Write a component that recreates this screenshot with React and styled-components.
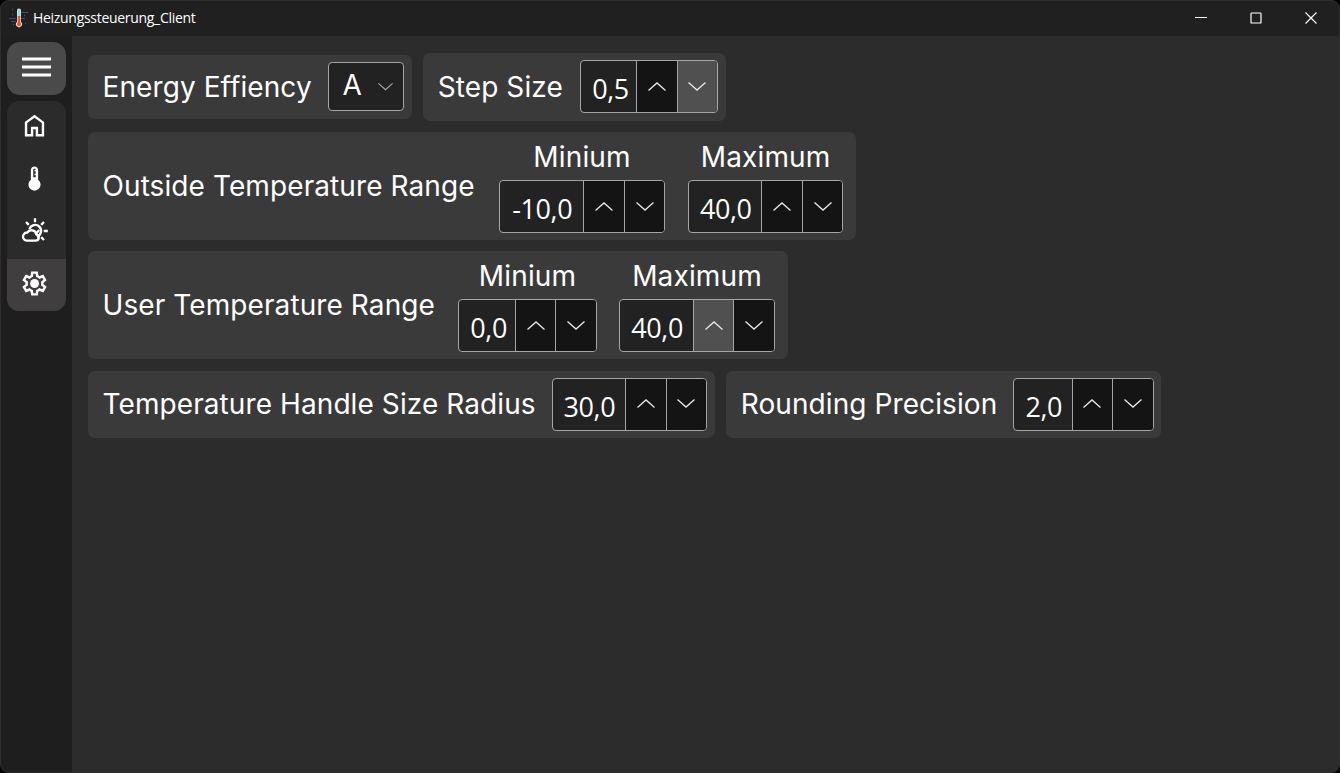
import React from 'react';
import styled, { createGlobalStyle } from 'styled-components';

const GlobalStyle = createGlobalStyle`
  * { box-sizing: border-box; }
  body { margin: 0; background: #000; overflow: hidden; }
`;

const Window = styled.div`
  position: relative;
  width: 1340px;
  height: 773px;
  display: flex;
  flex-direction: column;
  background: #2c2c2c;
  color: #fff;
  border-radius: 9px;
  overflow: hidden;
  font-family: Inter, sans-serif;

  &::after {
    content: '';
    position: absolute;
    inset: 0;
    border: 1px solid #2e2e2e;
    border-radius: 9px;
    pointer-events: none;
  }
`;

const TitleBar = styled.header`
  height: 36px;
  flex: none;
  display: flex;
  align-items: center;
  padding: 0 2px 1px 9px;
  background: #202020;
`;

const Title = styled.span`
  flex: 1;
  margin-left: 4px;
  font: 14px 'Open Sans', sans-serif;
  letter-spacing: -0.3px;
  white-space: nowrap;
`;

const CaptionButton = styled.button`
  width: 55px;
  height: 35px;
  padding: 0;
  border: 0;
  background: none;
  display: flex;
  align-items: center;
  justify-content: center;
`;

const Body = styled.div`
  flex: 1;
  display: flex;
`;

const Sidebar = styled.nav`
  width: 72px;
  flex: none;
  padding: 6px 6px 0 7px;
  background: #1e1e1e;
`;

const MenuButton = styled.button`
  width: 58.5px;
  height: 53px;
  padding: 0 0.5px 3px 0;
  border: 0;
  border-radius: 13px;
  background: #4a4a4a;
  display: flex;
  align-items: center;
  justify-content: center;
`;

const NavList = styled.div`
  width: 58.5px;
  margin-top: 6px;
  border-radius: 12px;
  overflow: hidden;
  background: #2b2b2b;
`;

const NavItem = styled.button`
  width: 100%;
  height: 52.5px;
  padding: 0 3.5px 3px 0;
  border: 0;
  background: ${(p) => (p.$active ? '#403e3f' : 'transparent')};
  display: flex;
  align-items: center;
  justify-content: center;
`;

const Content = styled.main`
  flex: 1;
  display: flex;
  flex-direction: column;
  align-items: flex-start;
  gap: 11.7px;
  padding: 17px 0 0 16px;
`;

const Row = styled.div`
  display: flex;
  align-items: center;
  gap: 11.7px;
`;

const Card = styled.section`
  height: ${(p) => p.$height}px;
  display: flex;
  align-items: ${(p) => (p.$ranged ? 'flex-start' : 'center')};
  padding: 0 ${(p) => (p.$ranged ? 13 : 7.5)}px 0 14.5px;
  border-radius: 7px;
  background: #3a3a3a;
`;

const Label = styled.span`
  width: ${(p) => p.$width}px;
  flex: none;
  font-size: 28px;
  line-height: 36px;
  letter-spacing: 0.09px;
  white-space: nowrap;
  align-self: center;
`;

const RangeColumn = styled.div`
  display: flex;
  flex-direction: column;
  align-items: center;
  padding-top: 7px;
  & + & { margin-left: 22.5px; }
`;

const Caption = styled.span`
  height: 41px;
  font-size: 28px;
  line-height: 36px;
  letter-spacing: 0.15px;
`;

const Field = styled.div`
  height: 53px;
  display: flex;
  border: 1px solid #a5a5a5;
  border-radius: 4px;
  overflow: hidden;
  background: #222;
`;

const Value = styled.span`
  width: ${(p) => p.$width}px;
  padding: 3px 0 0 ${(p) => p.$inset}px;
  font: 27px/49px 'Open Sans', sans-serif;
  letter-spacing: -0.4px;
  white-space: nowrap;
`;

const StepButton = styled.button`
  width: 40.5px;
  padding: 0 0 1px;
  border: 0;
  border-left: 1px solid #a5a5a5;
  background: ${(p) => (p.$hot ? '#505050' : '#141414')};
  display: flex;
  align-items: center;
  justify-content: center;
`;

const Select = styled.button`
  width: 76px;
  height: 49px;
  padding: 0 10px 0 13.5px;
  display: flex;
  align-items: center;
  justify-content: space-between;
  border: 1px solid #a5a5a5;
  border-radius: 4px;
  background: #222;
  color: #fff;
  font: 28px Inter, sans-serif;
`;

const SelectText = styled.span`
  line-height: 47px;
  height: 49px;
`;

const Chevron = ({ up, size = 18, color = '#e8e8e8' }) => (
  <svg width={size} height={size / 2} viewBox="0 0 18 9" fill="none" stroke={color} strokeWidth="1.3">
    <path d={up ? 'M.5 8.5 9 .9l8.500 7.600' : 'M.5.500 9 8.100 17.500.500'} />
  </svg>
);

const Spinner = ({ value, width, hot, inset = 11 }) => (
  <Field>
    <Value $width={width} $inset={inset}>{value}</Value>
    <StepButton $hot={hot === 'up'} aria-label="Increase"><Chevron up /></StepButton>
    <StepButton $hot={hot === 'down'} aria-label="Decrease"><Chevron /></StepButton>
  </Field>
);

const Range = ({ label, labelWidth, min, max }) => (
  <Card $height={107.5} $ranged>
    <Label $width={labelWidth}>{label}</Label>
    <RangeColumn><Caption>Minium</Caption><Spinner {...min} /></RangeColumn>
    <RangeColumn><Caption>Maximum</Caption><Spinner {...max} /></RangeColumn>
  </Card>
);

const AppLogo = () => (
  <svg width="20" height="20" viewBox="0 0 20 20">
    <g stroke="#4a4a6a" strokeWidth="1" fill="none">
      <path d="M0 10.500h7M2 13.500h5M12 4.500h7M12 10.500h4" />
      <path d="M3 1.500h1M3 6.500h1M4 16.500h1M15 7.500h1M16 15.500h1" strokeWidth="1.400" />
    </g>
    <path d="M8 2.500a2 2 0 0 1 4 0V14a3 3 0 1 1-4 0z" fill="#d8eef2" />
    <path d="M8.700 2.500a1.300 1.300 0 0 1 2.600 0V9H8.700z" fill="#7fe0f0" />
    <path d="M8.700 8h2.600v6.500a2.100 2.100 0 1 1-2.600 0z" fill="#f4511e" />
  </svg>
);

const HomeIcon = () => (
  <svg width="29" height="29" viewBox="0 0 24 24" fill="#fff">
    <path d="M6 19h3v-6h6v6h3v-9l-6-4.500L6 10zm-2 2V9l8-6 8 6v12h-7v-6h-2v6z" />
  </svg>
);

const ThermometerIcon = () => (
  <svg width="29" height="29" viewBox="0 0 24 24" fill="#fff">
    <path d="M15 13V5c0-1.660-1.340-3-3-3S9 3.340 9 5v8c-1.210.910-2 2.370-2 4 0 2.760 2.240 5 5 5s5-2.240 5-5c0-1.630-.790-3.090-2-4zm-4-8c0-.550.450-1 1-1s1 .450 1 1h-1v1h1v2h-1v1h1v2h-2z" />
  </svg>
);

const WeatherIcon = () => (
  <svg width="28" height="28" viewBox="0 0 24 24" fill="none" stroke="#fff" strokeWidth="2">
    <path d="M12 1v3.500M4.300 4.300l2.400 2.400M19.700 4.300l-2.400 2.400M23 12h-3.500M19.700 19.700l-2.400-2.400" />
    <path d="M7.200 10.500a5.100 5.100 0 1 1 6.300 6.300" />
    <path d="M5 20.300a3.500 3.500 0 1 1 .400-7 4.300 4.300 0 0 1 7.800 1.500 2.800 2.800 0 0 1-.700 5.500z" />
    <path d="m12.300 14.800 3.300-3.600" />
  </svg>
);

const GearIcon = () => (
  <svg width="29" height="29" viewBox="0 0 24 24" fill="#fff">
    <path d="m9.250 22-.4-3.200q-.325-.125-.612-.3-.288-.175-.563-.375L4.700 19.375l-2.750-4.750 2.575-1.950Q4.500 12.500 4.500 12.338v-.675q0-.163.025-.338L1.950 9.375l2.750-4.750 2.975 1.250q.275-.2.575-.375.3-.175.6-.3l.4-3.200h5.500l.4 3.200q.325.125.613.3.287.175.562.375l2.975-1.250 2.750 4.750-2.575 1.950q.025.175.025.338v.674q0 .163-.05.338l2.575 1.950-2.750 4.750-2.950-1.250q-.275.2-.575.375-.3.175-.6.3l-.4 3.200Zm1.750-2h1.975l.35-2.650q.775-.2 1.438-.587.662-.388 1.212-.938l2.475 1.025.975-1.700-2.150-1.625q.125-.35.175-.737.05-.388.05-.788t-.05-.788q-.05-.387-.175-.737l2.150-1.625-.975-1.700-2.475 1.050q-.55-.575-1.212-.963-.663-.387-1.438-.587L13 4h-1.975l-.35 2.650q-.775.2-1.437.587-.663.388-1.213.938L5.550 7.150l-.975 1.700 2.150 1.600q-.125.375-.175.750-.05.375-.05.800 0 .4.05.775t.175.750l-2.150 1.625.975 1.700 2.475-1.050q.55.575 1.213.963.662.387 1.437.587Z" />
    <circle cx="12.050" cy="12" r="3.700" />
  </svg>
);

const NAV = [
  { name: 'Home', Icon: HomeIcon },
  { name: 'Temperature', Icon: ThermometerIcon },
  { name: 'Weather', Icon: WeatherIcon },
  { name: 'Settings', Icon: GearIcon, active: true },
];

export default function App() {
  return (
    <Window>
      <GlobalStyle />
      <TitleBar>
        <AppLogo />
        <Title>Heizungssteuerung_Client</Title>
        <CaptionButton aria-label="Minimize">
          <svg width="12" height="12" stroke="#fff"><path d="M0 5.500h12" /></svg>
        </CaptionButton>
        <CaptionButton aria-label="Maximize">
          <svg width="12" height="12" fill="none" stroke="#fff"><rect x="1" y="1" width="10" height="10" rx=".6" strokeWidth="1.200" /></svg>
        </CaptionButton>
        <CaptionButton aria-label="Close">
          <svg width="12" height="12" stroke="#fff" strokeWidth="1.200"><path d="m.500.500 11 11m0-11-11 11" /></svg>
        </CaptionButton>
      </TitleBar>
      <Body>
        <Sidebar>
          <MenuButton aria-label="Menu">
            <svg width="29" height="22" stroke="#fff" strokeWidth="3"><path d="M0 3h29M0 11h29M0 19h29" /></svg>
          </MenuButton>
          <NavList>
            {NAV.map(({ name, Icon, active }) => (
              <NavItem key={name} $active={active} aria-label={name}><Icon /></NavItem>
            ))}
          </NavList>
        </Sidebar>
        <Content>
          <Row>
            <Card $height={64}>
              <Label $width={225.5}>Energy Effiency</Label>
              <Select><SelectText>A</SelectText><Chevron size={15} color="#a8a8a8" /></Select>
            </Card>
            <Card $height={67.5}>
              <Label $width={142.5}>Step Size</Label>
              <Spinner value="0,5" width={55} hot="down" />
            </Card>
          </Row>
          <Range
            label="Outside Temperature Range"
            labelWidth={396.2}
            min={{ value: '-10,0', width: 83.7, inset: 12.5 }}
            max={{ value: '40,0', width: 72.5 }}
          />
          <Range
            label="User Temperature Range"
            labelWidth={355.8}
            min={{ value: '0,0', width: 55.5 }}
            max={{ value: '40,0', width: 72.5, hot: 'up' }}
          />
          <Row>
            <Card $height={67.5}>
              <Label $width={449}>Temperature Handle Size Radius</Label>
              <Spinner value="30,0" width={72.5} />
            </Card>
            <Card $height={67.5}>
              <Label $width={272.7}>Rounding Precision</Label>
              <Spinner value="2,0" width={57.2} />
            </Card>
          </Row>
        </Content>
      </Body>
    </Window>
  );
}
